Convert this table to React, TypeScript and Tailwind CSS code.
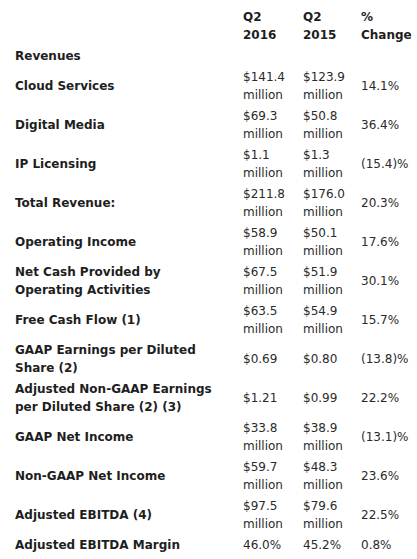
import React from "react";

type Row = { label: string; a: string; b: string; c: string; two?: boolean };

const rows: Row[] = [
  { label: "Cloud Services", a: "$141.4 million", b: "$123.9 million", c: "14.1%" },
  { label: "Digital Media", a: "$69.3 million", b: "$50.8 million", c: "36.4%" },
  { label: "IP Licensing", a: "$1.1 million", b: "$1.3 million", c: "(15.4)%" },
  { label: "Total Revenue:", a: "$211.8 million", b: "$176.0 million", c: "20.3%" },
  { label: "Operating Income", a: "$58.9 million", b: "$50.1 million", c: "17.6%" },
  { label: "Net Cash Provided by Operating Activities", a: "$67.5 million", b: "$51.9 million", c: "30.1%" },
  { label: "Free Cash Flow (1)", a: "$63.5 million", b: "$54.9 million", c: "15.7%" },
  { label: "GAAP Earnings per Diluted Share (2)", a: "$0.69", b: "$0.80", c: "(13.8)%", two: true },
  { label: "Adjusted Non-GAAP Earnings per Diluted Share (2) (3)", a: "$1.21", b: "$0.99", c: "22.2%", two: true },
  { label: "GAAP Net Income", a: "$33.8 million", b: "$38.9 million", c: "(13.1)%" },
  { label: "Non-GAAP Net Income", a: "$59.7 million", b: "$48.3 million", c: "23.6%" },
  { label: "Adjusted EBITDA (4)", a: "$97.5 million", b: "$79.6 million", c: "22.5%" },
  { label: "Adjusted EBITDA Margin", a: "46.0%", b: "45.2%", c: "0.8%" },
];

export default function App() {
  return (
    <div
      className="w-[417px] h-[559px] bg-white overflow-hidden text-[12px] leading-[18px] text-[#1e1e1e]"
      style={{ fontFamily: '"DejaVu Sans", Verdana, sans-serif' }}
    >
      <div className="grid grid-cols-[228px_60px_58px_1fr] gap-y-[3px] items-center pl-[15px] pt-[8px]">
        <div />
        <div className="font-bold">Q2<br />2016</div>
        <div className="font-bold">Q2<br />2015</div>
        <div className="font-bold">%<br />Change</div>

        <div className="font-bold">Revenues</div>
        <div />
        <div />
        <div />

        {rows.map((r) => (
          <React.Fragment key={r.label}>
            <div className="font-bold pr-[16px]">{r.label}</div>
            <div className="pr-[6px] text-[#2a2a2a]">{r.a}</div>
            <div className="pr-[6px] text-[#2a2a2a]">{r.b}</div>
            <div className="text-[#2a2a2a] whitespace-nowrap">{r.c}</div>
          </React.Fragment>
        ))}
      </div>
    </div>
  );
}
